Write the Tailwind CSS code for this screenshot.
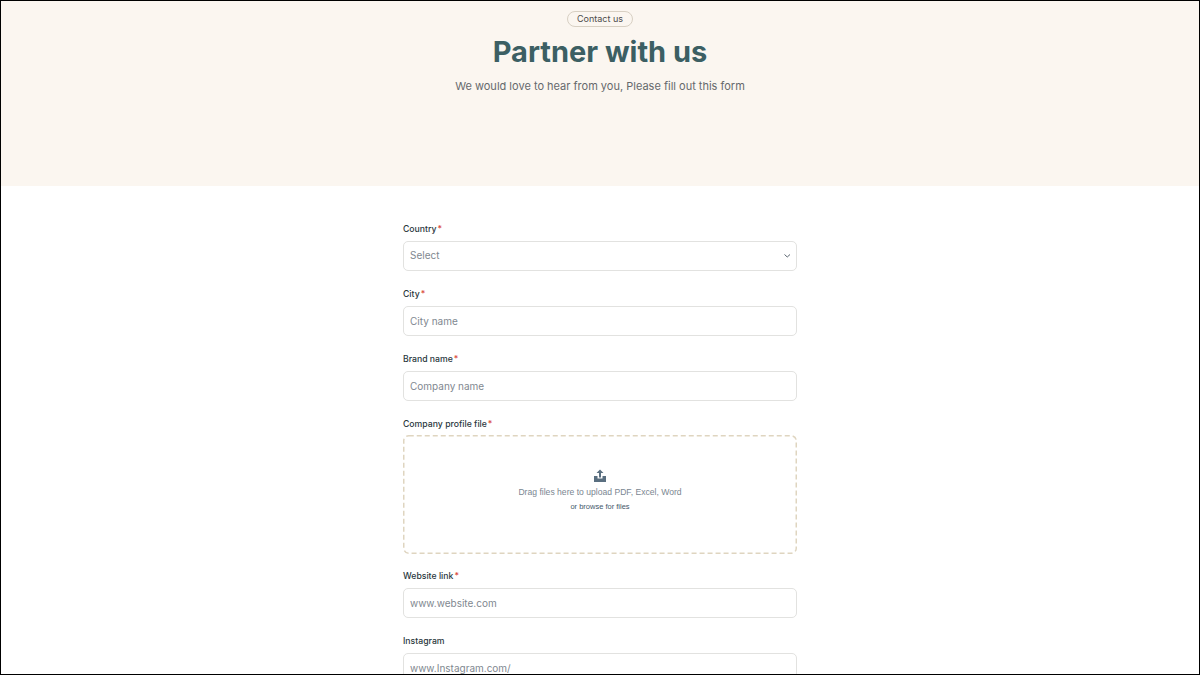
<!DOCTYPE html>
<html lang="en">
<head>
    <meta charset="UTF-8">
    <title>Partner with us</title>
    <script src="https://cdn.jsdelivr.net/npm/@tailwindcss/browser@4"></script>
</head>
<body class="bg-white h-[675px] overflow-hidden font-['Inter',sans-serif]">
    <div class="h-[675px] border border-black overflow-hidden">
        <header class="bg-[#fbf6f0] h-[185px] flex flex-col items-center pt-[10px]">
            <span class="h-[16px] w-[66px] flex items-center justify-center rounded-full border border-[#d8d0c3] text-[9px] text-[#4b4b4b]">Contact us</span>
            <h1 class="mt-[5px] text-[29px] leading-[40px] font-bold text-[#3c5f63]">Partner with us</h1>
            <p class="mt-[5px] text-[11px] leading-[18px] text-[#66696c]">We would love to hear from you, Please fill out this form</p>
        </header>
        <form class="w-[394px] mx-auto pt-[36px]">
            <label class="block text-[8.7px] leading-[14px] font-medium text-[#2a373d]">Country<span class="text-[#d9483b] ml-[1px]">*</span></label>
            <div class="mt-[5px] h-[30px] pl-[6px] pr-[4px] flex items-center justify-between rounded-[5px] border border-[#e2e2e0] text-[10px] text-[#7f8890]">
                <span class="-mt-[1px]">Select</span>
                <svg class="w-[8px] h-[8px] text-[#5b6670]" viewBox="0 0 8 8" fill="none" stroke="currentColor" stroke-width="1"><path d="M0.5 2.5 L3.25 5 L6 2.5"/></svg>
            </div>

            <label class="block mt-[16px] text-[8.7px] leading-[14px] font-medium text-[#2a373d]">City<span class="text-[#d9483b] ml-[1px]">*</span></label>
            <div class="mt-[5px] h-[30px] px-[6px] pt-[1px] flex items-center rounded-[5px] border border-[#e2e2e0] text-[10px] text-[#7f8890]">City name</div>

            <label class="block mt-[16px] text-[8.7px] leading-[14px] font-medium text-[#2a373d]">Brand name<span class="text-[#d9483b] ml-[1px]">*</span></label>
            <div class="mt-[5px] h-[30px] px-[6px] pt-[1px] flex items-center rounded-[5px] border border-[#e2e2e0] text-[10px] text-[#7f8890]">Company name</div>

            <label class="block mt-[16px] text-[8.7px] leading-[14px] font-medium text-[#2a373d]">Company profile file<span class="text-[#d9483b] ml-[1px]">*</span></label>
            <div class="relative mt-[4px] h-[119px] flex flex-col items-center pt-[34px]">
                <svg class="absolute inset-0 w-full h-full" fill="none"><rect x="0.75" y="0.75" width="392.5" height="117.5" rx="5" stroke="#dfd5c0" stroke-width="1.5" stroke-dasharray="5 3"/></svg>
                <svg class="w-[14px] h-[14px] text-[#5a6f80]" viewBox="0 0 14 14" fill="currentColor"><path d="M7 0.5 L10.5 4 L8 4 L8 8.5 L6 8.5 L6 4 L3.5 4 Z"/><path d="M1 7 L4.5 7 L4.5 9.5 L9.5 9.5 L9.5 7 L13 7 L13 13 L1 13 Z"/></svg>
                <p class="mt-[2px] font-['Liberation_Sans',sans-serif] text-[8.6px] leading-[14px] text-[#7a8691]">Drag files here to upload PDF, Excel, Word</p>
                <p class="mt-[2px] font-['Liberation_Sans',sans-serif] text-[7.5px] leading-[12px] text-[#44586a]">or browse for files</p>
            </div>

            <label class="block mt-[15px] text-[8.7px] leading-[14px] font-medium text-[#2a373d]">Website link<span class="text-[#d9483b] ml-[1px]">*</span></label>
            <div class="mt-[5px] h-[30px] px-[6px] pt-[1px] flex items-center rounded-[5px] border border-[#e2e2e0] text-[10px] text-[#7f8890]">www.website.com</div>

            <label class="block mt-[16px] text-[8.7px] leading-[14px] font-medium text-[#2a373d]">Instagram</label>
            <div class="mt-[5px] h-[30px] px-[6px] pt-[1px] flex items-center rounded-[5px] border border-[#e2e2e0] text-[10px] text-[#7f8890]">www.Instagram.com/</div>
        </form>
    </div>
</body>
</html>
